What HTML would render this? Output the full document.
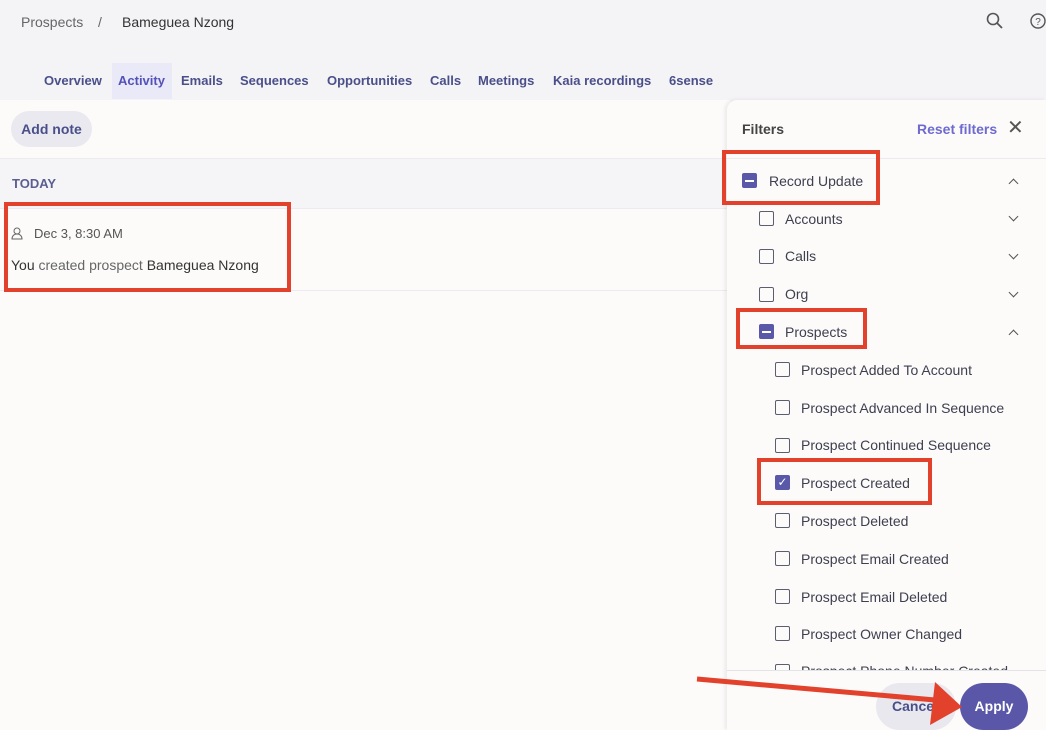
<!DOCTYPE html><html><head><style>
html,body{margin:0;width:1046px;height:730px;overflow:hidden}
body{position:relative;background:#f4f3f6;font-family:"Liberation Sans",sans-serif;}
.a{position:absolute;white-space:nowrap}
.tab{position:absolute;top:73px;font-size:13px;color:#4a4f8a;font-weight:bold}
.cb{position:absolute;width:13px;height:13px;border:1.6px solid #5b5d70;border-radius:2px}
.lbl{position:absolute;font-size:14px;color:#3e3f4f}
.red{position:absolute;border:4px solid #e2412b;box-sizing:border-box}
.chev{position:absolute;left:1010px;width:6px;height:6px;border-right:1.5px solid #555;border-bottom:1.5px solid #555}
</style></head><body>
<div class="a" style="left:21px;top:14px;font-size:14px;color:#666">Prospects</div>
<div class="a" style="left:98px;top:14px;font-size:14px;color:#666">/</div>
<div class="a" style="left:122px;top:14px;font-size:14px;color:#333">Bameguea Nzong</div>
<svg class="a" style="left:986px;top:12px" width="18" height="18"><circle cx="7" cy="7" r="5.5" stroke="#555" stroke-width="1.6" fill="none"/><line x1="11" y1="11" x2="16" y2="16" stroke="#555" stroke-width="1.8"/></svg>
<svg class="a" style="left:1030px;top:13px" width="18" height="18"><circle cx="8" cy="8" r="7" stroke="#555" stroke-width="1.4" fill="none"/><text x="8" y="12" font-size="10" text-anchor="middle" fill="#555" font-family="Liberation Sans">?</text></svg>
<div class="a" style="left:112px;top:63px;width:60px;height:36px;background:#eae9f7"></div>
<div class="tab" style="left:44px">Overview</div><div class="tab" style="left:118px;color:#5452b8">Activity</div><div class="tab" style="left:181px">Emails</div><div class="tab" style="left:240px">Sequences</div><div class="tab" style="left:327px">Opportunities</div><div class="tab" style="left:430px">Calls</div><div class="tab" style="left:478px">Meetings</div><div class="tab" style="left:553px">Kaia recordings</div><div class="tab" style="left:669px">6sense</div>
<div class="a" style="left:0;top:100px;width:730px;height:630px;background:#fcfbfa"></div>
<div class="a" style="left:11px;top:111px;width:81px;height:36px;border-radius:18px;background:#e9e9ef;color:#4a4f8a;font-weight:bold;font-size:14px;line-height:36px;text-align:center">Add note</div>
<div class="a" style="left:0;top:158px;width:730px;height:49px;background:#f5f5f8;border-top:1px solid #ececf0;border-bottom:1px solid #ececf0"></div>
<div class="a" style="left:12px;top:176px;font-size:13px;color:#5a5f8f;font-weight:bold">TODAY</div>
<svg class="a" style="left:11px;top:227px" width="12" height="13"><circle cx="6" cy="4" r="3" stroke="#666" fill="none"/><path d="M1 12c0-3 2-5 5-5s5 2 5 5z" stroke="#666" fill="none"/></svg>
<div class="a" style="left:34px;top:226px;font-size:13px;color:#555">Dec 3, 8:30 AM</div>
<div class="a" style="left:11px;top:257px;font-size:14px;color:#333">You <span style="color:#666">created prospect</span> Bameguea Nzong</div>
<div class="a" style="left:0;top:290px;width:730px;height:1px;background:#ececf0"></div>
<div class="a" style="left:727px;top:100px;width:319px;height:630px;background:#fcfbfa;border-radius:10px 0 0 0;box-shadow:-2px 0 4px rgba(0,0,0,.08)"></div>
<div class="a" style="left:742px;top:121px;font-size:14px;color:#444;font-weight:bold">Filters</div>
<div class="a" style="left:917px;top:121px;font-size:14px;color:#6e6ad0;font-weight:bold">Reset filters</div>
<div class="a" style="left:1007px;top:115px;font-size:20px;color:#555">✕</div>
<div class="a" style="left:727px;top:158px;width:319px;height:1px;background:#ececf0"></div>
<div class="a" style="left:742px;top:173px;width:15px;height:15px;background:#5a58a8;border-radius:2px"><div style="margin:6.5px 3px;height:2px;background:#fff"></div></div>
<div class="lbl" style="left:769px;top:173px">Record Update</div>
<div class="chev" style="top:180px;transform:rotate(-135deg)"></div>
<div class="cb" style="left:759px;top:211px"></div><div class="lbl" style="left:785px;top:211px">Accounts</div><div class="chev" style="top:213px;transform:rotate(45deg)"></div>
<div class="cb" style="left:759px;top:249px"></div><div class="lbl" style="left:785px;top:248px">Calls</div><div class="chev" style="top:251px;transform:rotate(45deg)"></div>
<div class="cb" style="left:759px;top:287px"></div><div class="lbl" style="left:785px;top:286px">Org</div><div class="chev" style="top:289px;transform:rotate(45deg)"></div>
<div class="a" style="left:759px;top:324px;width:15px;height:15px;background:#5a58a8;border-radius:2px"><div style="margin:6.5px 3px;height:2px;background:#fff"></div></div>
<div class="lbl" style="left:785px;top:324px">Prospects</div><div class="chev" style="top:331px;transform:rotate(-135deg)"></div>
<div class="cb" style="left:775px;top:362px"></div><div class="lbl" style="left:801px;top:362px">Prospect Added To Account</div>
<div class="cb" style="left:775px;top:400px"></div><div class="lbl" style="left:801px;top:400px">Prospect Advanced In Sequence</div>
<div class="cb" style="left:775px;top:438px"></div><div class="lbl" style="left:801px;top:437px">Prospect Continued Sequence</div>
<div class="a" style="left:775px;top:475px;width:15px;height:15px;background:#5a58a8;border-radius:2px;color:#fff;font-size:12px;line-height:15px;text-align:center">✓</div><div class="lbl" style="left:801px;top:475px">Prospect Created</div>
<div class="cb" style="left:775px;top:513px"></div><div class="lbl" style="left:801px;top:513px">Prospect Deleted</div>
<div class="cb" style="left:775px;top:551px"></div><div class="lbl" style="left:801px;top:551px">Prospect Email Created</div>
<div class="cb" style="left:775px;top:589px"></div><div class="lbl" style="left:801px;top:589px">Prospect Email Deleted</div>
<div class="cb" style="left:775px;top:626px"></div><div class="lbl" style="left:801px;top:626px">Prospect Owner Changed</div>
<div class="a" style="left:727px;top:660px;width:319px;height:10px;overflow:hidden"><div class="cb" style="left:48px;top:4px"></div><div class="lbl" style="left:74px;top:3px">Prospect Phone Number Created</div></div>
<div class="a" style="left:727px;top:670px;width:319px;height:1px;background:#e4e4e8"></div>
<div class="a" style="left:876px;top:683px;width:80px;height:47px;border-radius:24px;background:#e8e8ee;color:#4a4f8a;font-weight:bold;font-size:14px;line-height:47px;padding-left:16px;box-sizing:border-box">Cancel</div>
<div class="a" style="left:960px;top:683px;width:68px;height:47px;border-radius:24px;background:#5a57a8;color:#fff;font-weight:bold;font-size:14px;line-height:47px;text-align:center">Apply</div>
<div class="red" style="left:4px;top:202px;width:287px;height:90px"></div>
<div class="red" style="left:722px;top:150px;width:158px;height:55px"></div>
<div class="red" style="left:736px;top:308px;width:131px;height:41px"></div>
<div class="red" style="left:757px;top:458px;width:175px;height:47px"></div>
<svg class="a" style="left:0;top:0" width="1046" height="730"><line x1="697" y1="679" x2="935" y2="700" stroke="#e2412b" stroke-width="5"/><polygon points="962,707 930,725 935,682" fill="#e2412b"/></svg>
</body></html>
